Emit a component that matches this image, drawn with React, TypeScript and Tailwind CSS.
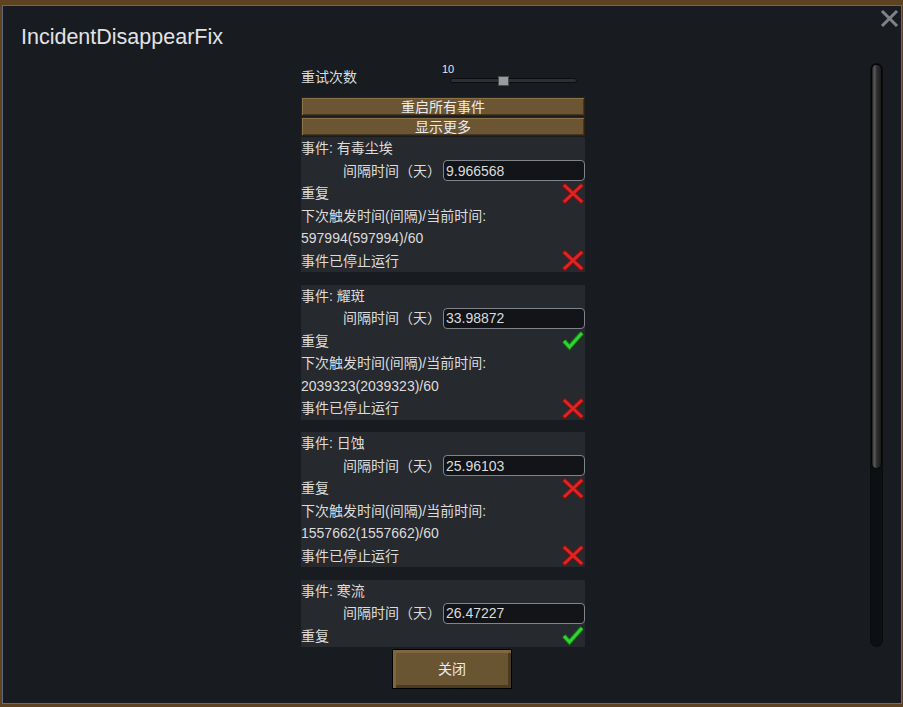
import React from 'react';

type IncidentRow = {
  name: string;
  interval: string;
  repeat: boolean;
  next?: string;
};

const incidents: IncidentRow[] = [
  { name: '有毒尘埃', interval: '9.966568', repeat: false, next: '597994(597994)/60' },
  { name: '耀斑', interval: '33.98872', repeat: true, next: '2039323(2039323)/60' },
  { name: '日蚀', interval: '25.96103', repeat: false, next: '1557662(1557662)/60' },
  { name: '寒流', interval: '26.47227', repeat: true },
];

function Cross() {
  return (
    <svg width="22" height="21" viewBox="0 0 22 21" className="mr-[1px]">
      <g strokeLinecap="square">
        <line x1="3" y1="3" x2="19" y2="18" stroke="#7a1212" strokeWidth="5" />
        <line x1="19" y1="3" x2="3" y2="18" stroke="#7a1212" strokeWidth="5" />
        <line x1="3" y1="3" x2="19" y2="18" stroke="#e02424" strokeWidth="3" />
        <line x1="19" y1="3" x2="3" y2="18" stroke="#e02424" strokeWidth="3" />
      </g>
    </svg>
  );
}

function Check() {
  return (
    <svg width="22" height="21" viewBox="0 0 22 21" className="mr-[1px]">
      <polyline points="2,11 7.5,17 20,3" fill="none" stroke="#13701a" strokeWidth="5" strokeLinejoin="miter" />
      <polyline points="2,11 7.5,17 20,3" fill="none" stroke="#2fd42f" strokeWidth="3" strokeLinejoin="miter" />
    </svg>
  );
}

function Row({ children, className = '' }: { children: React.ReactNode; className?: string }) {
  return <div className={`h-[22.5px] flex items-center shrink-0 ${className}`}>{children}</div>;
}

// the list is scrolled: the last entry is only partly in view
function IncidentCard({ item }: { item: IncidentRow }) {
  return (
    <div className="bg-[#26292e] mb-[12.5px] shrink-0">
      <Row>事件: {item.name}</Row>
      <Row className="justify-end">
        <span className="mr-[2px]">间隔时间（天）</span>
        <div className="w-[142px] h-[21px] bg-[#121417] border border-[#80858b] rounded-[4px] pl-[2px] flex items-center">
          {item.interval}
        </div>
      </Row>
      <Row className="justify-between">
        <span>重复</span>
        {item.repeat ? <Check /> : <Cross />}
      </Row>
      {item.next && (
        <>
          <Row>下次触发时间(间隔)/当前时间:</Row>
          <Row>{item.next}</Row>
          <Row className="justify-between">
            <span>事件已停止运行</span>
            <Cross />
          </Row>
        </>
      )}
    </div>
  );
}

function WoodButton({ label }: { label: string }) {
  return (
    <div className="h-[19px] bg-[#6b5533] border border-[#2e2413] shadow-[inset_1px_1px_0_#8a7146,inset_-1px_-1px_0_#46361d] flex items-center justify-center text-[#ececec]">
      {label}
    </div>
  );
}

export default function App() {
  return (
    <div className="w-[903px] h-[707px] bg-[#5f4220] pt-[5px] pl-[2px] overflow-hidden font-['Liberation_Sans','Noto_Sans_CJK_SC',sans-serif] text-[14px] leading-none text-[#dcdcdc]">
      <div className="relative w-[900px] h-[699px] bg-[#181b20] border border-[#5d6b7b] flex flex-col">
        {/* close glyph */}
        <svg width="19" height="19" viewBox="0 0 19 19" className="absolute left-[877px] top-[3px]">
          <line x1="2" y1="2" x2="17" y2="17" stroke="#7f8388" strokeWidth="3" />
          <line x1="17" y1="2" x2="2" y2="17" stroke="#7f8388" strokeWidth="3" />
        </svg>

        <div className="h-[57px] pl-[18px] pt-[21px] text-[21.5px] text-[#e1e3e5] shrink-0">IncidentDisappearFix</div>

        <div className="h-[584px] flex shrink-0">
          <div className="w-[298px] shrink-0" />
          <div className="w-[284px] h-full overflow-hidden flex flex-col shrink-0">
            <div className="h-[34px] flex items-start shrink-0">
              <span className="w-[141px] pt-[7px]">重试次数</span>
              <div className="relative w-[136px] h-full">
                <span className="absolute left-0 top-[1px] text-[11px] text-[#e8e8e8]">10</span>
                <div className="absolute left-[8px] top-[15px] w-[127px] h-[5px] rounded-full bg-[#2c2f33] border border-[#0c0d0f]" />
                <div className="absolute left-[56px] top-[13px] w-[11px] h-[10px] bg-[#9a9b9c] border border-[#4a4b4c]" />
              </div>
            </div>
            <div className="flex flex-col gap-[1px] mb-[1px] shrink-0">
              <WoodButton label="重启所有事件" />
              <WoodButton label="显示更多" />
            </div>
            {incidents.map((item) => (
              <IncidentCard key={item.name} item={item} />
            ))}
          </div>
          <div className="flex-1" />
          <div className="w-[13px] h-full mr-[18px] rounded-full bg-[#0d1013] border border-[#0a0b0d] flex flex-col">
            <div className="h-[405px] rounded-full bg-[linear-gradient(90deg,#1a1a1a_0%,#5a5a5a_25%,#2e2e2e_55%,#1c1c1c_100%)] border border-[#050505]" />
          </div>
        </div>

        <div className="flex justify-center pt-[2px]">
          <div className="w-[120px] h-[40px] bg-[#6a5533] border border-black shadow-[inset_3px_3px_0_#7d6640,inset_-3px_-3px_0_#4b3a20] flex items-center justify-center text-[#ececec]">
            关闭
          </div>
        </div>
      </div>
    </div>
  );
}
